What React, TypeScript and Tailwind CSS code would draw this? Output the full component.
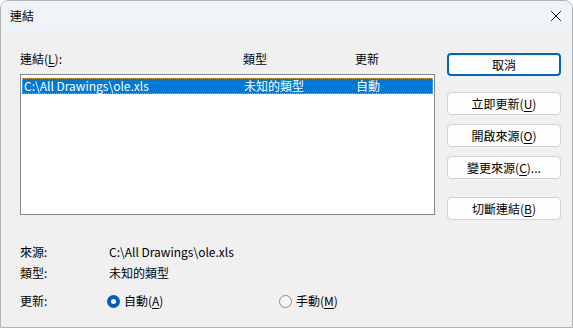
import React from "react";

const font = { fontFamily: '"Noto Sans CJK TC", "Noto Sans", sans-serif' };

function Btn({ children, primary }: { children: React.ReactNode; primary?: boolean }) {
  return (
    <div
      className={
        "flex h-[23px] w-[114px] items-center justify-center rounded-[4px] bg-[#fdfdfd] text-[12px] text-black " +
        (primary ? "border-2 border-[#0067c0]" : "border border-[#d0d0d0]")
      }
    >
      {children}
    </div>
  );
}

function Radio({ checked }: { checked?: boolean }) {
  return checked ? (
    <div className="flex h-[13px] w-[13px] items-center justify-center rounded-full bg-[#005fb8]">
      <div className="h-[5px] w-[5px] rounded-full bg-white" />
    </div>
  ) : (
    <div className="h-[13px] w-[13px] rounded-full border border-[#8a8a8a] bg-[#f6f6f6]" />
  );
}

export default function App() {
  return (
    <div
      style={font}
      className="flex h-[328px] w-[573px] flex-col overflow-hidden rounded-t-[8px] border border-[#b4b4b4] bg-[#f0f0f0] text-[12px] leading-[14px] text-black"
    >
      <div className="flex h-[30px] shrink-0 items-center justify-between bg-[#eff4f9] pl-[9px] pr-[9px]">
        <span className="text-[12px]">連結</span>
        <svg width="12" height="12" viewBox="0 0 12 12" className="mr-[1px]">
          <path d="M1 1 L11 11 M11 1 L1 11" stroke="#1a1a1a" strokeWidth="1" />
        </svg>
      </div>

      <div className="flex flex-1">
        <div className="flex w-[426px] flex-col pl-[19px]">
          <div className="mt-[21px] flex h-[14px]">
            <span className="w-[223px]">
              連結(<span className="underline underline-offset-2">L</span>):
            </span>
            <span className="w-[112px]">類型</span>
            <span>更新</span>
          </div>
          <div className="mt-[8px] h-[141px] w-[415px] border border-[#828790] bg-white p-[3px] pl-[1px] pr-[1px]">
            <div className="flex h-[16px] items-center border border-dotted border-[#f0a030] bg-[#0078d7] pl-[1px] text-white">
              <span className="w-[220px]">C:\All Drawings\ole.xls</span>
              <span className="w-[112px]">未知的類型</span>
              <span>自動</span>
            </div>
          </div>

          <div className="mt-[30px] flex h-[14px]">
            <span className="w-[89px]">來源:</span>
            <span>C:\All Drawings\ole.xls</span>
          </div>
          <div className="mt-[7px] flex h-[14px]">
            <span className="w-[89px]">類型:</span>
            <span>未知的類型</span>
          </div>
          <div className="mt-[13px] flex h-[16px] items-center">
            <span className="w-[87px]">更新:</span>
            <div className="flex w-[172px] items-center gap-[4px]">
              <Radio checked />
              <span>
                自動(<span className="underline underline-offset-2">A</span>)
              </span>
            </div>
            <div className="flex items-center gap-[4px]">
              <Radio />
              <span>
                手動(<span className="underline underline-offset-2">M</span>)
              </span>
            </div>
          </div>
        </div>

        <div className="flex flex-col pl-[20px] pt-[22px]">
          <Btn primary>取消</Btn>
          <div className="mt-[16px] flex flex-col gap-[9px]">
            <Btn>
              立即更新(<span className="underline underline-offset-2">U</span>)
            </Btn>
            <Btn>
              開啟來源(<span className="underline underline-offset-2">O</span>)
            </Btn>
            <Btn>
              變更來源(<span className="underline underline-offset-2">C</span>)...
            </Btn>
          </div>
          <div className="mt-[18px]">
            <Btn>
              切斷連結(<span className="underline underline-offset-2">B</span>)
            </Btn>
          </div>
        </div>
      </div>
    </div>
  );
}
